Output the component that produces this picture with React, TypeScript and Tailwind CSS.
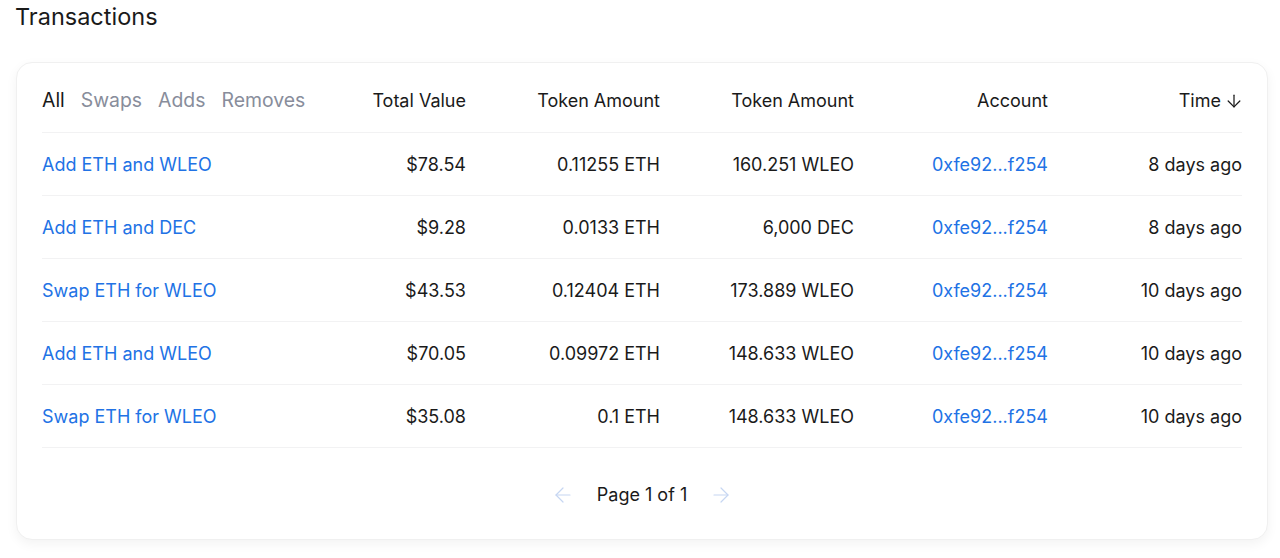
import { ArrowDown, ArrowLeft, ArrowRight } from "lucide-react";

const rows = [
  { label: "Add ETH and WLEO", value: "$78.54", a: "0.11255 ETH", b: "160.251 WLEO", time: "8 days ago" },
  { label: "Add ETH and DEC", value: "$9.28", a: "0.0133 ETH", b: "6,000 DEC", time: "8 days ago" },
  { label: "Swap ETH for WLEO", value: "$43.53", a: "0.12404 ETH", b: "173.889 WLEO", time: "10 days ago" },
  { label: "Add ETH and WLEO", value: "$70.05", a: "0.09972 ETH", b: "148.633 WLEO", time: "10 days ago" },
  { label: "Swap ETH for WLEO", value: "$35.08", a: "0.1 ETH", b: "148.633 WLEO", time: "10 days ago" },
];

const grid = "grid grid-cols-[230px_repeat(5,1fr)] items-center";

export default function App() {
  return (
    <div className="w-[1280px] h-[558px] bg-white pl-4 font-['Inter',sans-serif] text-[#1a1a1a]">
      <h2 className="pt-[2px] text-[23.5px] leading-[30px] -ml-px">Transactions</h2>

      <div className="mt-[30px] w-[1252px] rounded-2xl border border-[#f0f0f0] bg-white px-[25px] pb-[31px] shadow-[0_4px_12px_rgba(0,0,0,0.05)]">
        {/* header */}
        <div className={`${grid} h-[70px] pt-[6px] border-b border-[#f2f2f3] text-[18px]`}>
          <div className="flex gap-4 text-[19.4px]">
            <span className="text-[#1a1a1a]">All</span>
            <span className="text-[#888d9b]">Swaps</span>
            <span className="text-[#888d9b]">Adds</span>
            <span className="text-[#888d9b]">Removes</span>
          </div>
          <div className="text-right">Total Value</div>
          <div className="text-right">Token Amount</div>
          <div className="text-right">Token Amount</div>
          <div className="text-right">Account</div>
          <div className="flex items-center justify-end gap-[3px]">
            Time <ArrowDown className="w-[20px] h-[20px] -mr-[2px]" strokeWidth={1.5} />
          </div>
        </div>

        {rows.map((r, i) => (
          <div key={i} className={`${grid} h-[63px] border-b border-[#f2f2f3] text-[18px]`}>
            <div className="text-[#2172e5]">{r.label}</div>
            <div className="text-right">{r.value}</div>
            <div className="text-right">{r.a}</div>
            <div className="text-right">{r.b}</div>
            <div className="text-right text-[#2172e5]">0xfe92...f254</div>
            <div className="text-right">{r.time}</div>
          </div>
        ))}

        {/* pagination */}
        <div className="mt-[33px] flex items-center justify-center gap-[22px] text-[18px]">
          <ArrowLeft className="w-6 h-6 text-[#c6d6f2]" strokeWidth={1.2} />
          <span>Page 1 of 1</span>
          <ArrowRight className="w-6 h-6 text-[#c6d6f2]" strokeWidth={1.2} />
        </div>
      </div>
    </div>
  );
}
